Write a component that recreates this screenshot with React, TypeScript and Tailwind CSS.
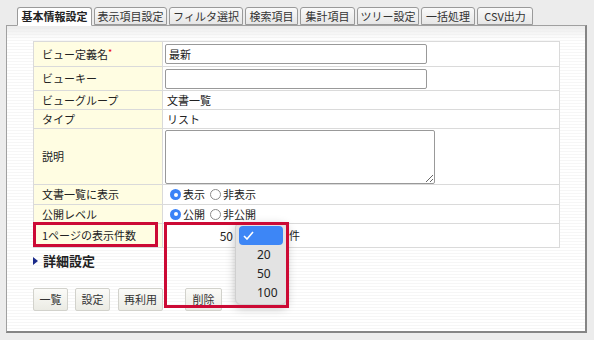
import React from "react";

const tabs = [
  { label: "基本情報設定", w: "w-[75px]", active: true },
  { label: "表示項目設定", w: "w-[73px]" },
  { label: "フィルタ選択", w: "w-[74px]" },
  { label: "検索項目", w: "w-[53px]" },
  { label: "集計項目", w: "w-[55px]" },
  { label: "ツリー設定", w: "w-[62px]" },
  { label: "一括処理", w: "w-[54px]" },
  { label: "CSV出力", w: "w-[56px]" },
];

const Radio: React.FC<{ checked?: boolean }> = ({ checked }) =>
  checked ? (
    <span className="w-[11px] h-[11px] rounded-full bg-[#3a82f7] flex items-center justify-center shrink-0">
      <span className="w-[4px] h-[4px] rounded-full bg-white" />
    </span>
  ) : (
    <span className="block w-[11px] h-[11px] rounded-full border border-[#8a8a8a] bg-white shrink-0" />
  );

const Row: React.FC<{ label: React.ReactNode; h: string; children?: React.ReactNode }> = ({
  label,
  h,
  children,
}) => (
  <div className={`flex ${h} border-b border-[#dadada]`}>
    <div className="w-[129px] shrink-0 bg-[#fffde2] border-r border-[#dadada] pl-[8px] flex items-center">
      {label}
    </div>
    <div className="flex-1 pl-[2px] flex items-center bg-white">{children}</div>
  </div>
);

const Btn: React.FC<{ w: string; children: React.ReactNode }> = ({ w, children }) => (
  <div
    className={`${w} h-[23px] border border-[#d2d2cc] rounded-[2px] bg-gradient-to-b from-[#fbfbf8] to-[#ebebe4] flex items-center justify-center text-[11px] text-[#333]`}
  >
    {children}
  </div>
);

const RadioPair: React.FC<{ a: string; b: string }> = ({ a, b }) => (
  <div className="flex items-center pl-[5px]">
    <Radio checked />
    <span className="ml-[2px]">{a}</span>
    <span className="ml-[5px] flex items-center">
      <Radio />
    </span>
    <span className="ml-[2px]">{b}</span>
  </div>
);

export default function App() {
  return (
    <div className="relative w-[594px] h-[340px] overflow-hidden bg-[#ececec] text-[#222] font-['Noto_Sans_CJK_JP','Noto_Sans',sans-serif]">
      {/* Tabs */}
      <div className="flex gap-[2px] pl-[17px] pt-[7px] h-[25px] relative z-10">
        {tabs.map((t) => (
          <div
            key={t.label}
            className={`${t.w} h-[18px] border border-[#9a9a9a] rounded-t-[3px] flex items-center justify-center text-[11px] leading-none ${
              t.active
                ? "bg-white font-bold border-b-white h-[19px]"
                : "bg-gradient-to-b from-[#fafafa] to-[#e6e6e6] text-[#333]"
            }`}
          >
            {t.label}
          </div>
        ))}
      </div>

      {/* Panel */}
      <div className="ml-[6px] w-[581px] h-[308px] border-l border-t border-[#a0a0a0] border-r-[2px] border-b-[2px] border-r-[#858585] border-b-[#858585] bg-[repeating-linear-gradient(180deg,#ffffff_0px,#ffffff_2px,#f6f6f6_2px,#f6f6f6_3px)]">
        <div className="h-[14px] bg-gradient-to-b from-[#ececec] to-transparent" />
        <div className="pl-[26px] pt-[1px]">
          {/* Table */}
          <div className="w-[527px] border-t border-l border-r border-[#dadada] text-[11px]">
            <Row
              h="h-[25px]"
              label={
                <span>
                  ビュー定義名<span className="text-[#e00] text-[9px] align-top">*</span>
                </span>
              }
            >
              <div className="w-[262px] h-[20px] border border-[#999] rounded-[2px] bg-white flex items-center pl-[3px]">
                最新
              </div>
            </Row>
            <Row h="h-[24px]" label="ビューキー">
              <div className="w-[262px] h-[20px] border border-[#999] rounded-[2px] bg-white" />
            </Row>
            <Row h="h-[19px]" label="ビューグループ">
              <span className="pl-[2px]">文書一覧</span>
            </Row>
            <Row h="h-[19px]" label="タイプ">
              <span className="pl-[2px]">リスト</span>
            </Row>
            <Row h="h-[56px]" label="説明">
              <textarea
                readOnly
                className="w-[270px] h-[54px] border border-[#999] rounded-[2px] bg-white outline-none"
              />
            </Row>
            <Row h="h-[20px]" label="文書一覧に表示">
              <RadioPair a="表示" b="非表示" />
            </Row>
            <Row h="h-[19px]" label="公開レベル">
              <RadioPair a="公開" b="非公開" />
            </Row>
            <Row h="h-[24px]" label="1ページの表示件数">
              <div className="flex items-center">
                <div className="w-[122px] text-right pr-[54px] text-[12px]">50</div>
                <span className="ml-[2px]">件</span>
              </div>
            </Row>
          </div>

          {/* 詳細設定 */}
          <div className="flex items-center h-[20px] mt-[3px]">
            <svg width="5" height="8" viewBox="0 0 5 8" className="shrink-0">
              <polygon points="0,0 5,4 0,8" fill="#1a2a8a" />
            </svg>
            <span className="ml-[5px] text-[13px] font-bold">詳細設定</span>
          </div>

          {/* Buttons */}
          <div className="flex mt-[17px]">
            <Btn w="w-[35px]">一覧</Btn>
            <div className="ml-[7px]">
              <Btn w="w-[35px]">設定</Btn>
            </div>
            <div className="ml-[8px]">
              <Btn w="w-[45px]">再利用</Btn>
            </div>
            <div className="ml-[22px]">
              <Btn w="w-[37px]">削除</Btn>
            </div>
          </div>
        </div>
      </div>

      {/* Select popup */}
      <div className="absolute left-[235px] top-[222px] w-[52px] h-[83px] rounded-[6px] bg-[#e3e3e3] border border-[#cfcfcf] shadow-[0_3px_10px_rgba(0,0,0,0.25)] px-[3px] pt-[3px] text-[12px] text-[#222] font-['Noto_Sans',sans-serif]">
        <div className="h-[19px] rounded-[4px] bg-[#3d86f6] flex items-center pl-[4px]">
          <svg width="11" height="9" viewBox="0 0 11 9">
            <polyline points="1,5 4,8 10,1" fill="none" stroke="white" strokeWidth="1.6" />
          </svg>
        </div>
        <div className="h-[19px] flex items-center pl-[18px]">20</div>
        <div className="h-[19px] flex items-center pl-[18px]">50</div>
        <div className="h-[19px] flex items-center pl-[18px]">100</div>
      </div>

      {/* Highlight boxes */}
      <div className="absolute left-[33px] top-[222px] w-[125px] h-[25px] border-[3px] border-[#cc0a35]" />
      <div className="absolute left-[164px] top-[222px] w-[125px] h-[86px] border-[3px] border-[#cc0a35]" />
    </div>
  );
}
